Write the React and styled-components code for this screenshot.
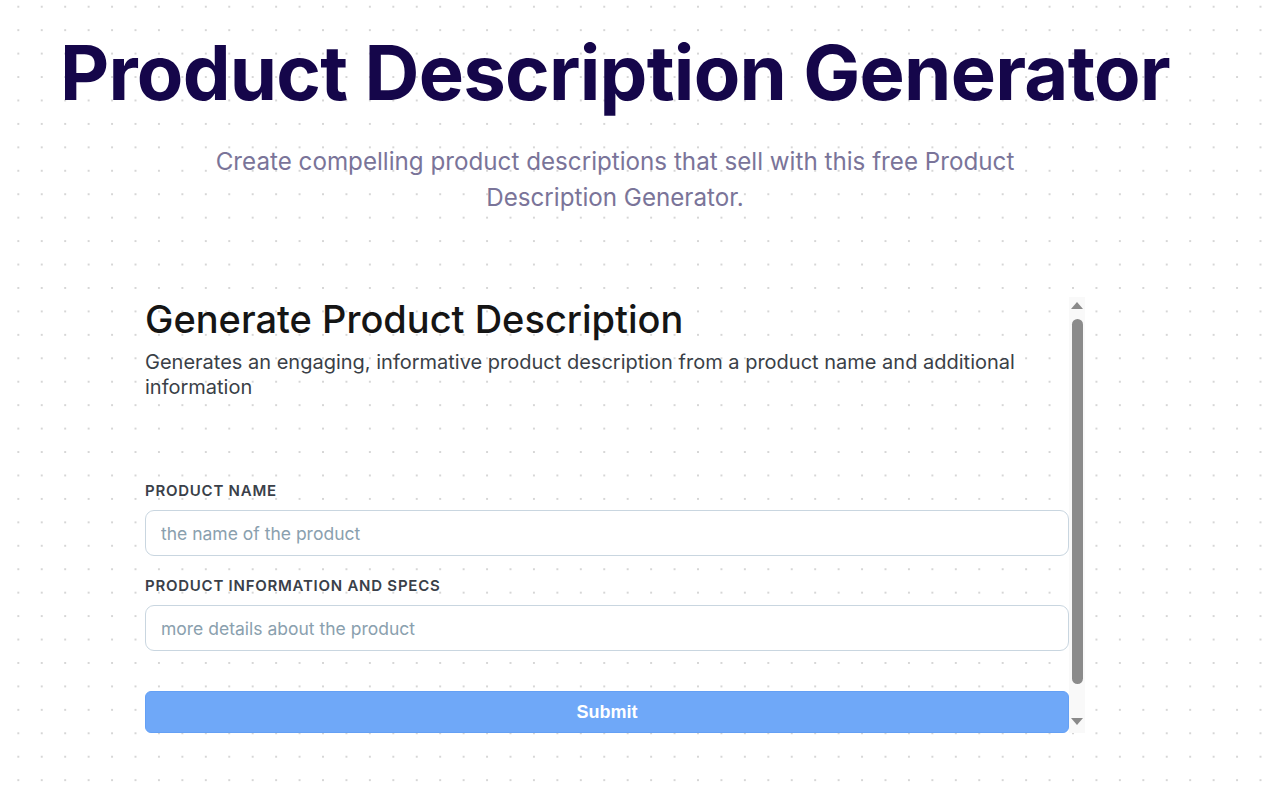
import styled, { createGlobalStyle } from "styled-components";

const GlobalStyle = createGlobalStyle`
  html, body {
    margin: 0;
    padding: 0;
  }
  body {
    font-family: Inter, "Noto Sans", sans-serif;
    background-color: #ffffff;
    background-image: radial-gradient(circle, #d6d6d6 1px, transparent 1.4px);
    background-size: 23.45px 23.45px;
    background-position: 6.6px -5px;
    min-height: 790px;
  }
`;

const Page = styled.main`
  width: 1230px;
  display: flex;
  flex-direction: column;
  align-items: center;
  padding-top: 27px;
`;

const Title = styled.h1`
  margin: 0;
  font-size: 76px;
  line-height: 91px;
  font-weight: 700;
  letter-spacing: -0.01em;
  color: #15064a;
  text-align: center;
  white-space: nowrap;
`;

const Lead = styled.p`
  margin: 26px 0 0;
  max-width: 820px;
  font-size: 24.2px;
  line-height: 36px;
  color: #7a7499;
  text-align: center;
`;

const Frame = styled.section`
  margin-top: 81px;
  width: 940px;
  height: 436px;
  display: flex;
`;

const Scroller = styled.div`
  flex: 1;
  min-width: 0;
  overflow-y: auto;
  scrollbar-width: none;

  &::-webkit-scrollbar {
    display: none;
  }
`;

const Inner = styled.div`
  padding-bottom: 51px;
`;

const Rail = styled.div`
  width: 16px;
  flex-shrink: 0;
  display: flex;
  flex-direction: column;
  align-items: center;
  background: #f9f9f9;
`;

const Arrow = styled.div`
  height: 16px;
  width: 100%;
  display: flex;
  justify-content: center;
  align-items: ${(p) => (p.$down ? "flex-start" : "center")};

  &::before {
    content: "";
    width: 0;
    height: 0;
    border-left: 6px solid transparent;
    border-right: 6px solid transparent;
    ${(p) =>
      p.$down
        ? "border-top: 7px solid #8a8a8a; margin-top: 1px;"
        : "border-bottom: 7px solid #8a8a8a;"}
  }
`;

const Track = styled.div`
  flex: 1;
  width: 100%;
  display: flex;
  justify-content: center;
  padding-top: 6px;
  box-sizing: border-box;
`;

const Thumb = styled.div`
  width: 11px;
  height: 365px;
  border-radius: 6px;
  background: #8b8b8b;
`;

const CardTitle = styled.h2`
  margin: 0;
  font-size: 38px;
  line-height: 44px;
  font-weight: 500;
  color: #151515;
`;

const CardText = styled.p`
  margin: 9px 0 0;
  font-size: 20px;
  line-height: 25px;
  color: #3a3f47;
`;

const Form = styled.form`
  margin-top: 81px;
  display: flex;
  flex-direction: column;
`;

const Label = styled.label`
  font-size: 15px;
  line-height: 20px;
  font-weight: 600;
  letter-spacing: 0.05em;
  text-transform: uppercase;
  color: #3a4049;
  margin-top: ${(p) => (p.$first ? "0" : "20px")};
`;

const Input = styled.input`
  margin-top: 9px;
  height: 46px;
  box-sizing: border-box;
  width: 100%;
  border: 1px solid #c9d6e0;
  border-radius: 9px;
  background: #ffffff;
  padding: 0 15px;
  font-family: Inter, "Noto Sans", sans-serif;
  font-size: 17.5px;
  color: #1f2933;
  outline: none;

  &::placeholder {
    color: #8aa0ae;
  }
`;

const Submit = styled.button`
  margin-top: 40px;
  height: 42px;
  width: 100%;
  border: 1px solid #64a0f5;
  border-radius: 6px;
  background: #6fa8f8;
  color: #ffffff;
  font-family: "Liberation Sans", Arial, sans-serif;
  font-weight: 700;
  font-size: 18px;
  cursor: pointer;
`;

export default function App() {
  return (
    <>
      <GlobalStyle />
      <Page>
        <Title>Product Description Generator</Title>
        <Lead>
          Create compelling product descriptions that sell with this free Product
          Description Generator.
        </Lead>
        <Frame>
          <Scroller>
            <Inner>
              <CardTitle>Generate Product Description</CardTitle>
              <CardText>
                Generates an engaging, informative product description from a product
                name and additional information
              </CardText>
              <Form onSubmit={(e) => e.preventDefault()}>
                <Label $first htmlFor="name">Product Name</Label>
                <Input id="name" placeholder="the name of the product" />
                <Label htmlFor="info">Product Information and Specs</Label>
                <Input id="info" placeholder="more details about the product" />
                <Submit type="submit">Submit</Submit>
              </Form>
            </Inner>
          </Scroller>
          <Rail aria-hidden="true">
            <Arrow />
            <Track>
              <Thumb />
            </Track>
            <Arrow $down />
          </Rail>
        </Frame>
      </Page>
    </>
  );
}
